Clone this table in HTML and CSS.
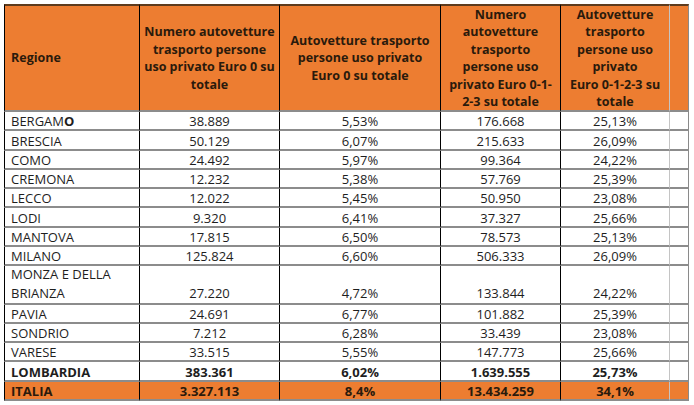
FILE: index.html
```html
<!DOCTYPE html>
<html lang="it">
<head>
<meta charset="utf-8">
<title>Autovetture Euro 0-1-2-3</title>
<link rel="stylesheet" href="styles.css">
</head>
<body>
<div class="sheet" role="table">
  <div class="c h first lab" role="columnheader">Regione</div>
  <div class="c h" role="columnheader">Numero autovetture<br>trasporto persone<br>uso privato Euro 0 su<br>totale</div>
  <div class="c h" role="columnheader">Autovetture trasporto<br>persone uso privato<br>Euro 0 su totale</div>
  <div class="c h" role="columnheader">Numero<br>autovetture<br>trasporto<br>persone uso<br>privato Euro 0-1-<br>2-3 su totale</div>
  <div class="c h lastdata" role="columnheader">Autovetture<br>trasporto<br>persone uso<br>privato<br>Euro 0-1-2-3 su<br>totale</div>
  <div class="c h spare"></div>

  <div class="c first lab">BERGAM<b>O</b></div><div class="c">38.889</div><div class="c">5,53%</div><div class="c">176.668</div><div class="c lastdata">25,13%</div><div class="c spare"></div>
  <div class="c first lab">BRESCIA</div><div class="c">50.129</div><div class="c">6,07%</div><div class="c">215.633</div><div class="c lastdata">26,09%</div><div class="c spare"></div>
  <div class="c first lab">COMO</div><div class="c">24.492</div><div class="c">5,97%</div><div class="c">99.364</div><div class="c lastdata">24,22%</div><div class="c spare"></div>
  <div class="c first lab">CREMONA</div><div class="c">12.232</div><div class="c">5,38%</div><div class="c">57.769</div><div class="c lastdata">25,39%</div><div class="c spare"></div>
  <div class="c first lab">LECCO</div><div class="c">12.022</div><div class="c">5,45%</div><div class="c">50.950</div><div class="c lastdata">23,08%</div><div class="c spare"></div>
  <div class="c first lab">LODI</div><div class="c">9.320</div><div class="c">6,41%</div><div class="c">37.327</div><div class="c lastdata">25,66%</div><div class="c spare"></div>
  <div class="c first lab">MANTOVA</div><div class="c">17.815</div><div class="c">6,50%</div><div class="c">78.573</div><div class="c lastdata">25,13%</div><div class="c spare"></div>
  <div class="c first lab">MILANO</div><div class="c">125.824</div><div class="c">6,60%</div><div class="c">506.333</div><div class="c lastdata">26,09%</div><div class="c spare"></div>
  <div class="c first lab tall">MONZA E DELLA<br>BRIANZA</div><div class="c tall">27.220</div><div class="c tall">4,72%</div><div class="c tall">133.844</div><div class="c lastdata tall">24,22%</div><div class="c spare tall"></div>
  <div class="c first lab">PAVIA</div><div class="c">24.691</div><div class="c">6,77%</div><div class="c">101.882</div><div class="c lastdata">25,39%</div><div class="c spare"></div>
  <div class="c first lab">SONDRIO</div><div class="c">7.212</div><div class="c">6,28%</div><div class="c">33.439</div><div class="c lastdata">23,08%</div><div class="c spare"></div>
  <div class="c first lab">VARESE</div><div class="c">33.515</div><div class="c">5,55%</div><div class="c">147.773</div><div class="c lastdata">25,66%</div><div class="c spare"></div>
  <div class="c first lab bold">LOMBARDIA</div><div class="c bold">383.361</div><div class="c bold">6,02%</div><div class="c bold">1.639.555</div><div class="c lastdata bold">25,73%</div><div class="c spare"></div>
  <div class="c first lab bold tot">ITALIA</div><div class="c bold tot">3.327.113</div><div class="c bold tot">8,4%</div><div class="c bold tot">13.434.259</div><div class="c lastdata bold tot">34,1%</div><div class="c spare tot"></div>
</div>
</body>
</html>
```

FILE: styles.css
```css
html, body {
  margin: 0;
  padding: 0;
  background: #ffffff;
}

body {
  padding: 4px;
}

.sheet {
  display: grid;
  grid-template-columns: 136px 140px 161px 120px 109px 19px;
  grid-template-rows: 108px;
  grid-auto-rows: 19.25px;
  width: 685px;
  font-family: "Open Sans", Lato, "Liberation Sans", sans-serif;
  font-size: 13px;
  color: #1e1e1e;
}

.c {
  box-sizing: border-box;
  display: flex;
  align-items: flex-end;
  justify-content: center;
  text-align: center;
  padding: 0 6px 0;
  line-height: 15px;
  white-space: nowrap;
  border-right: 1px solid #000000;
  border-bottom: 2px solid #8c8c8c;
}

.first {
  border-left: 1px solid #000000;
}

.lab {
  justify-content: flex-start;
  text-align: left;
}

.lastdata {
  border-right-color: #c4c4c4;
}

.spare {
  border-right-color: #8a8a8a;
  padding: 0;
}

.h {
  background: #ed7d31;
  color: #2a1a0c;
  font-weight: 700;
  font-size: 12.5px;
  align-items: center;
  line-height: 17.5px;
  border-top: 2px solid #5e3b1d;
  padding-bottom: 0;
}

.tall {
  grid-row: span 2;
  line-height: 19px;
  padding-bottom: 0;
}

.bold {
  font-weight: 700;
}

.tot {
  background: #ed7d31;
  color: #2a1a0c;
}
```
